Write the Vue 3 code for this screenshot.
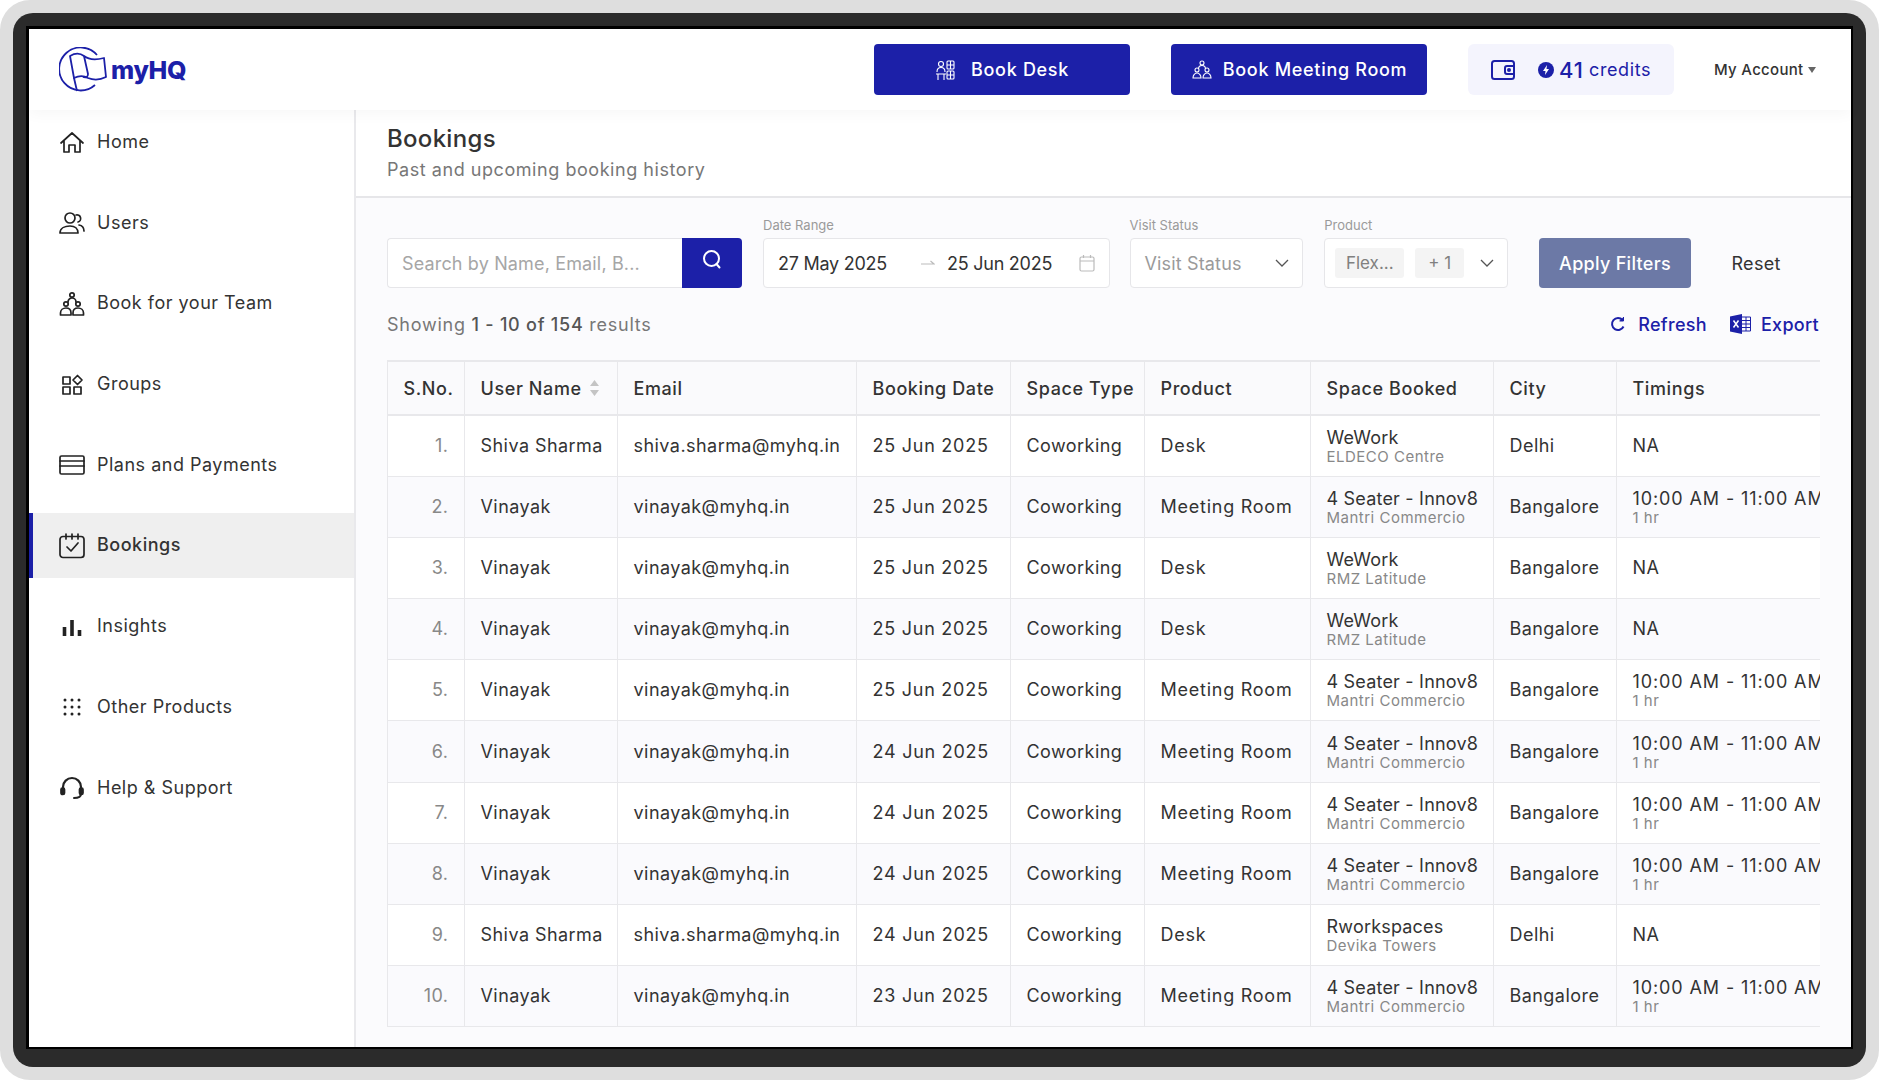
<template>
  <div class="outer">
    <div class="bezel">
      <div class="screen">
        <header class="topbar">
          <div class="logo">
            <svg width="48" height="46" viewBox="0 0 48 46" fill="none" stroke="#1c20a8" stroke-width="1.800" stroke-linejoin="round">
              <path d="M38 8A21.500 21.500 0 1 0 36 38" />
              <path d="M11 9C16 6 21 6 25 9C30 13 37 13 45 11L47 30C41 33 34 33 29 31C24 28 19 29 15 31Z" fill="#fff" />
              <path d="M15 31L18 44" />
              <path d="M25 9L29 27C29 30 27 31 24 30" />
            </svg>
            <span class="logo-text">myHQ</span>
          </div>
          <button class="book-btn">
            <svg width="22" height="22" viewBox="0 0 22 22" fill="none" stroke="#fff" stroke-width="1.100">
              <circle cx="6" cy="5" r="2.500" /><path d="M2 13c0-3 2-4.500 4-4.500s4 1.500 4 4.500" /><rect x="12" y="2" width="7" height="8" rx="1" /><path d="M12 6h7M15.500 2v8" /><rect x="12" y="12" width="7" height="8" rx="1" /><path d="M12 16h7M15.500 12v8M1 15h10M3 15v6M9 15v6" />
            </svg>
            Book Desk
          </button>
          <button class="book-btn second">
            <svg width="22" height="22" viewBox="0 0 22 22" fill="none" stroke="#fff" stroke-width="1.100">
              <circle cx="11" cy="4" r="2" /><path d="M7.500 10c0-2 1.500-3.500 3.500-3.500s3.500 1.500 3.500 3.500" /><circle cx="6" cy="11" r="2" /><circle cx="16" cy="11" r="2" /><path d="M2 19c0-3 2-5 4-5s4 2 4 5zM12 19c0-3 2-5 4-5s4 2 4 5z" />
            </svg>
            Book Meeting Room
          </button>
          <div class="credits">
            <svg class="wallet" width="24" height="24" viewBox="0 0 24 24" fill="none" stroke="#1c20a8" stroke-width="2">
              <rect x="1" y="3" width="22" height="18" rx="2.500" /><path d="M23 8h-7a2 2 0 0 0-2 2v4a2 2 0 0 0 2 2h7" /><circle cx="18" cy="12" r="1" />
            </svg>
            <svg width="16" height="16" viewBox="0 0 16 16"><circle cx="8" cy="8" r="8" fill="#1c20a8" /><path d="M9 3L5 9h2.500L7 13l4-6H8.500z" fill="#fff" /></svg>
            <span class="credit-num">41</span>
            <span class="credit-word">credits</span>
          </div>
          <div class="account">My Account <span class="caret"></span></div>
        </header>

        <div class="body">
          <nav class="sidebar">
            <div v-for="item in navItems" :key="item.name" :class="['nav-item', { active: item.name === 'Bookings' }]">
              <svg class="nav-icon" width="26" height="26" viewBox="0 0 26 26" fill="none" stroke="#222" stroke-width="1.700" stroke-linejoin="round" stroke-linecap="round" v-html="item.icon"></svg>
              <span class="nav-label">{{ item.name }}</span>
            </div>
          </nav>

          <main class="content">
            <div class="page-head">
              <h1>Bookings</h1>
              <p>Past and upcoming booking history</p>
            </div>

            <div class="page-body">
              <div class="filters">
                <div class="search">
                  <input placeholder="Search by Name, Email, B..." />
                  <button class="search-btn">
                    <svg width="22" height="22" viewBox="0 0 22 22" fill="none" stroke="#fff" stroke-width="2" stroke-linecap="round"><circle cx="10.500" cy="9.500" r="7.500" /><path d="M15.500 15l3 3.500" /></svg>
                  </button>
                </div>
                <div class="field date">
                  <label>Date Range</label>
                  <div class="box date-box">
                    <span class="date-val">27 May 2025</span>
                    <span class="arrow">
                      <svg width="14" height="8" viewBox="0 0 14 8" fill="none" stroke="#bbb" stroke-width="1.200"><path d="M0 5h13L9.500 2" /></svg>
                    </span>
                    <span class="date-val">25 Jun 2025</span>
                    <svg class="cal" width="16" height="18" viewBox="0 0 16 18" fill="none" stroke="#bbb" stroke-width="1.200"><rect x="1" y="3" width="14" height="14" rx="1.500" /><path d="M1 7h14M4.500 1v3M11.500 1v3" /></svg>
                  </div>
                </div>
                <div class="field visit">
                  <label>Visit Status</label>
                  <div class="box select-box">
                    <span class="placeholder">Visit Status</span>
                    <svg width="14" height="8" viewBox="0 0 14 8" fill="none" stroke="#555" stroke-width="1.300"><path d="M1 1l6 6 6-6" /></svg>
                  </div>
                </div>
                <div class="field product">
                  <label>Product</label>
                  <div class="box select-box tags">
                    <span class="tag flex-tag">Flex...</span>
                    <span class="tag plus-tag">+ 1</span>
                    <svg width="14" height="8" viewBox="0 0 14 8" fill="none" stroke="#555" stroke-width="1.300"><path d="M1 1l6 6 6-6" /></svg>
                  </div>
                </div>
                <button class="apply">Apply Filters</button>
                <button class="reset">Reset</button>
              </div>

              <div class="summary">
                <span class="showing">Showing <b>1 - 10 of 154</b> results</span>
                <div class="actions">
                  <a class="link">
                    <svg width="16" height="16" viewBox="0 0 16 16" fill="none" stroke="#1c20a8" stroke-width="2"><path d="M13.500 10.500A6 6 0 1 1 12.500 4" /><path d="M13.500 1v4h-4" fill="#1c20a8" stroke-width="1" /></svg>
                    Refresh
                  </a>
                  <a class="link excel">
                    <svg width="21" height="20" viewBox="0 0 21 20"><path d="M0 2.500L12 0v20L0 17.500z" fill="#1c20a8" /><path d="M3.500 6.500l5 7M8.500 6.500l-5 7" stroke="#fff" stroke-width="1.500" /><path d="M12 3h8.500v14H12M12 6.500h8.500M12 10h8.500M12 13.500h8.500M16 3v14" fill="none" stroke="#1c20a8" stroke-width="1" /></svg>
                    Export
                  </a>
                </div>
              </div>

              <div class="table-wrap">
                <table>
                  <colgroup>
                    <col v-for="w in colWidths" :key="w.key" :style="{ width: w.px + 'px' }" />
                  </colgroup>
                  <thead>
                    <tr>
                      <th>S.No.</th>
                      <th>
                        <span class="sort-head">User Name
                          <svg width="11" height="18" viewBox="0 0 11 18" fill="#c4c4c4"><path d="M5.500 1l4.500 6H1zM5.500 17l4.500-6H1z" /></svg>
                        </span>
                      </th>
                      <th>Email</th>
                      <th>Booking Date</th>
                      <th>Space Type</th>
                      <th>Product</th>
                      <th>Space Booked</th>
                      <th>City</th>
                      <th class="last">Timings</th>
                    </tr>
                  </thead>
                  <tbody>
                    <tr v-for="(row, i) in rows" :key="i">
                      <td class="num">{{ i + 1 }}.</td>
                      <td>{{ row.name }}</td>
                      <td>{{ row.email }}</td>
                      <td class="wide">{{ row.date }}</td>
                      <td>Coworking</td>
                      <td class="wide">{{ row.product }}</td>
                      <td>
                        <div class="main-line">{{ row.space }}</div>
                        <div class="sub-line">{{ row.location }}</div>
                      </td>
                      <td>{{ row.city }}</td>
                      <td class="last">
                        <template v-if="row.product === 'Desk'">NA</template>
                        <template v-else>
                          <div class="main-line time-line">10:00 AM - 11:00 AM</div>
                          <div class="sub-line">1 hr</div>
                        </template>
                      </td>
                    </tr>
                  </tbody>
                </table>
              </div>
            </div>
          </main>
        </div>
      </div>
    </div>
  </div>
</template>

<script setup>
const navItems = [
  { name: 'Home', icon: '<path d="M2 13L13 3l11 10M5 11v11h5v-7h6v7h5V11" />' },
  { name: 'Users', icon: '<circle cx="11" cy="8" r="5" /><path d="M1 23c0-5 5-7 10-7s8 3 8 7zM17 5a3.500 3.500 0 0 1 2 7M20 15c3 .5 5 3 5 6" />' },
  { name: 'Book for your Team', icon: '<circle cx="13" cy="4" r="2.200" /><path d="M9 11c0-2.500 2-4 4-4s4 1.500 4 4" /><circle cx="7" cy="13" r="2.200" /><circle cx="19" cy="13" r="2.200" /><path d="M1.500 24v-2c0-3 2.500-5 5.500-5s5 2 5 5v2zM14 24v-2c0-3 2-5 5-5s5.500 2 5.500 5v2z" />' },
  { name: 'Groups', icon: '<rect x="4" y="5" width="7" height="7" /><path d="M18.500 3.500l4.500 4.500-4.500 4.500L14 8z" /><rect x="4" y="15" width="7" height="7" /><rect x="15" y="15" width="7" height="7" />' },
  { name: 'Plans and Payments', icon: '<rect x="1" y="4" width="24" height="18" rx="1.500" /><path d="M1 9h24M1 14h24" />' },
  { name: 'Bookings', icon: '<rect x="1" y="3.500" width="24" height="21" rx="3" /><path d="M7 1v5M13 1v5M19 1v5M8 14l4 4 7-8" />' },
  { name: 'Insights', icon: '<path d="M5.500 13v9M13 6v16M20.500 16v6" stroke-width="3.600" stroke-linecap="butt" />' },
  { name: 'Other Products', icon: '<g fill="#222" stroke="none"><circle cx="6" cy="6" r="1.500" /><circle cx="13" cy="6" r="1.500" /><circle cx="20" cy="6" r="1.500" /><circle cx="6" cy="13" r="1.500" /><circle cx="13" cy="13" r="1.500" /><circle cx="20" cy="13" r="1.500" /><circle cx="6" cy="20" r="1.500" /><circle cx="13" cy="20" r="1.500" /><circle cx="20" cy="20" r="1.500" /></g>' },
  { name: 'Help & Support', icon: '<path d="M4 16v-4a9 9 0 0 1 18 0v4" stroke-width="2.200" /><rect x="2" y="13" width="3.500" height="6.500" rx="1.500" fill="#222" /><rect x="20.500" y="13" width="3.500" height="6.500" rx="1.500" fill="#222" /><path d="M22 19c0 3-2 4-7 4" stroke-width="2" />' }
];

const colWidths = [
  { key: 'sno', px: 77 }, { key: 'name', px: 153 }, { key: 'email', px: 239 },
  { key: 'date', px: 154 }, { key: 'type', px: 134 }, { key: 'product', px: 166 },
  { key: 'space', px: 183 }, { key: 'city', px: 123 }, { key: 'timing', px: 230 }
];

const innov = { space: '4 Seater - Innov8', location: 'Mantri Commercio', product: 'Meeting Room', city: 'Bangalore' };
const vinayak = { name: 'Vinayak', email: 'vinayak@myhq.in' };
const shiva = { name: 'Shiva Sharma', email: 'shiva.sharma@myhq.in' };
const rmz = { space: 'WeWork', location: 'RMZ Latitude', product: 'Desk', city: 'Bangalore' };

const rows = [
  { ...shiva, date: '25 Jun 2025', space: 'WeWork', location: 'ELDECO Centre', product: 'Desk', city: 'Delhi' },
  { ...vinayak, ...innov, date: '25 Jun 2025' },
  { ...vinayak, ...rmz, date: '25 Jun 2025' },
  { ...vinayak, ...rmz, date: '25 Jun 2025' },
  { ...vinayak, ...innov, date: '25 Jun 2025' },
  { ...vinayak, ...innov, date: '24 Jun 2025' },
  { ...vinayak, ...innov, date: '24 Jun 2025' },
  { ...vinayak, ...innov, date: '24 Jun 2025' },
  { ...shiva, date: '24 Jun 2025', space: 'Rworkspaces', location: 'Devika Towers', product: 'Desk', city: 'Delhi' },
  { ...vinayak, ...innov, date: '23 Jun 2025' }
];
</script>

<style>
html, body { background: #fff; overflow: hidden; }
</style>

<style scoped>
* { box-sizing: border-box; }

.outer {
  width: 1879px;
  height: 1080px;
  padding: 13px;
  background: #dedede;
  border-radius: 30px;
  overflow: hidden;
  font-family: Inter, "Liberation Sans", sans-serif;
  color: #333;
}
.bezel {
  height: 1054px;
  padding: 13px 13px 14px;
  background: #2b2b2b;
  border-radius: 20px;
}
.screen {
  height: 1023px;
  border: solid #000;
  border-width: 3px 2px 2px 3px;
  background: #fff;
  display: flex;
  flex-direction: column;
}

/* 상단 바 */
.topbar {
  height: 81px;
  flex: none;
  display: flex;
  align-items: center;
  padding-left: 30px;
  background: #fff;
  box-shadow: 0 4px 14px rgba(0,0,0,0.035);
  position: relative;
}
.logo { display: flex; align-items: center; width: 815px; color: #1c20a8; }
.logo-text { font-size: 25px; font-weight: 800; margin-left: 4px; letter-spacing: -0.3px; }
.book-btn {
  width: 256px;
  height: 51px;
  margin-right: 41px;
  display: flex;
  align-items: center;
  justify-content: center;
  gap: 14px;
  background: #1c20a8;
  color: #fff;
  border: none;
  border-radius: 4px;
  font: 500 18px Inter, sans-serif;
  letter-spacing: 0.7px;
}
.book-btn.second { margin-right: 41px; gap: 10px; }
.credits {
  width: 206px;
  height: 51px;
  display: flex;
  align-items: center;
  padding-left: 23px;
  background: #f4f4fd;
  border-radius: 6px;
  color: #1c20a8;
}
.wallet { margin-right: 23px; }
.credit-num { margin: 0 5px; font-size: 22px; font-weight: 500; letter-spacing: 1px; }
.credit-word { font-size: 18px; letter-spacing: 0.6px; }
.account { margin-left: 40px; font-size: 15px; font-weight: 500; letter-spacing: 0.3px; white-space: nowrap; color: #333; display: flex; align-items: center; gap: 5px; }
.caret { border: 4.5px solid transparent; border-top: 6px solid #666; border-bottom: 0; }

.body { flex: 1; display: flex; min-height: 0; }

/* 사이드바 */
.sidebar {
  width: 327px;
  flex: none;
  border-right: 2px solid #e9e9ec;
  display: flex;
  flex-direction: column;
  gap: 15.7px;
}
.nav-item {
  height: 65px;
  flex: none;
  display: flex;
  align-items: center;
  gap: 12px;
  padding-left: 30px;
  font-size: 18px;
  letter-spacing: 0.5px;
  color: #333;
}
.nav-label { padding-bottom: 2px; }
.nav-item.active { background: #efefef; border-left: 4px solid #1c20a8; padding-left: 26px; font-weight: 500; }
.nav-icon { flex: none; }

/* 본문 */
.content { flex: 1; min-width: 0; display: flex; flex-direction: column; }
.page-head { height: 88px; flex: none; padding: 15px 31px 0; border-bottom: 2px solid #e6e6e9; background: #fff; }
.page-head h1 { margin: 0; font-size: 24px; line-height: 28px; font-weight: 500; letter-spacing: 0.3px; color: #333; }
.page-head p { margin: 5px 0 0; font-size: 18px; line-height: 24px; letter-spacing: 0.55px; color: #777; }

.page-body { flex: 1; padding: 40px 30px 0 31px; background: #fbfbfd; min-height: 0; }

.filters { display: flex; align-items: flex-end; height: 50px; }
.search { width: 355px; height: 50px; display: flex; margin-right: 21px; }
.search input {
  width: 295px;
  height: 50px;
  padding: 0 14px;
  border: 1.5px solid #e6e6e9;
  border-right: none;
  border-radius: 4px 0 0 4px;
  background: #fff;
  font: 18px Inter, sans-serif;
  letter-spacing: 0.15px;
  outline: none;
}
.search input::placeholder { color: #a6a6a6; }
.search-btn { width: 60px; height: 50px; padding: 0 0 4px; border: none; border-radius: 0 4px 4px 0; background: #1c20a8; }

.field { position: relative; }
.field label { position: absolute; left: 0; top: -21px; font-size: 13px; line-height: 16px; color: #9a9a9a; white-space: nowrap; }
.box { height: 50px; border: 1.5px solid #e6e6e9; border-radius: 4px; background: #fff; display: flex; align-items: center; font-size: 18px; }
.date { width: 353px; margin-right: 20px; }
.date-box { padding: 0 14px; }
.date-val { width: 130px; white-space: nowrap; color: #333; letter-spacing: -0.25px; }
.arrow { width: 39px; padding-left: 13px; display: flex; }
.cal { margin-left: auto; }
.visit { width: 177px; margin-right: 21px; }
.select-box { justify-content: space-between; padding: 0 13px 0 14px; }
.placeholder { color: #9a9a9a; white-space: nowrap; letter-spacing: 0.15px; }
.product { width: 187px; margin-right: 31px; }
.tags { justify-content: flex-start; padding: 0 13px 0 10px; }
.tags svg { margin-left: auto; }
.tag { height: 30px; display: flex; align-items: center; justify-content: center; background: #f4f4f4; border-radius: 3px; color: #808080; font-size: 17px; }
.flex-tag { width: 69px; margin-right: 11px; }
.plus-tag { width: 49px; }
.apply { width: 155px; height: 50px; border: none; border-radius: 4px; background: #6c79a6; color: #fff; font: 500 18px Inter, sans-serif; letter-spacing: 0.3px; }
.reset { width: 132px; height: 50px; border: none; background: none; color: #333; font: 18px Inter, sans-serif; letter-spacing: 0.3px; }

.summary { display: flex; justify-content: space-between; align-items: center; height: 36px; margin: 18px 0 18px; font-size: 18px; color: #777; }
.showing { letter-spacing: 0.75px; }
.showing b { font-weight: 500; color: #555; }
.actions { display: flex; gap: 23px; margin-right: 2px; }
.link { display: flex; align-items: center; gap: 12px; color: #1c20a8; font-weight: 500; letter-spacing: 0.3px; white-space: nowrap; }
.link.excel { gap: 10px; }

.table-wrap { width: 1433px; overflow: hidden; }
table { width: 1459px; table-layout: fixed; border-collapse: collapse; font-size: 18px; }
th, td { border: 1px solid #e8e8eb; padding: 0 15.5px; text-align: left; white-space: nowrap; color: #333; overflow: hidden; }
thead th { height: 54px; border-top-width: 2px; border-bottom-width: 2px; background: #fafafc; font-weight: 500; letter-spacing: 0.6px; }
tbody td { height: 61.200px; line-height: 22px; font-weight: 400; letter-spacing: 0.45px; }
tbody td.wide { letter-spacing: 0.75px; }
tbody tr:nth-child(odd) td { background: #fff; }
tbody tr:nth-child(even) td { background: #fafafd; }
th.last, td.last { border-right: none; overflow: visible; }
td.num { text-align: right; color: #888; }
.sort-head { display: inline-flex; align-items: center; gap: 7px; }
.main-line { line-height: 21px; letter-spacing: 0.2px; }
.time-line { letter-spacing: 0.9px; white-space: nowrap; }
.sub-line { font-size: 15px; line-height: 17px; letter-spacing: 0.5px; color: #888; }
</style>
